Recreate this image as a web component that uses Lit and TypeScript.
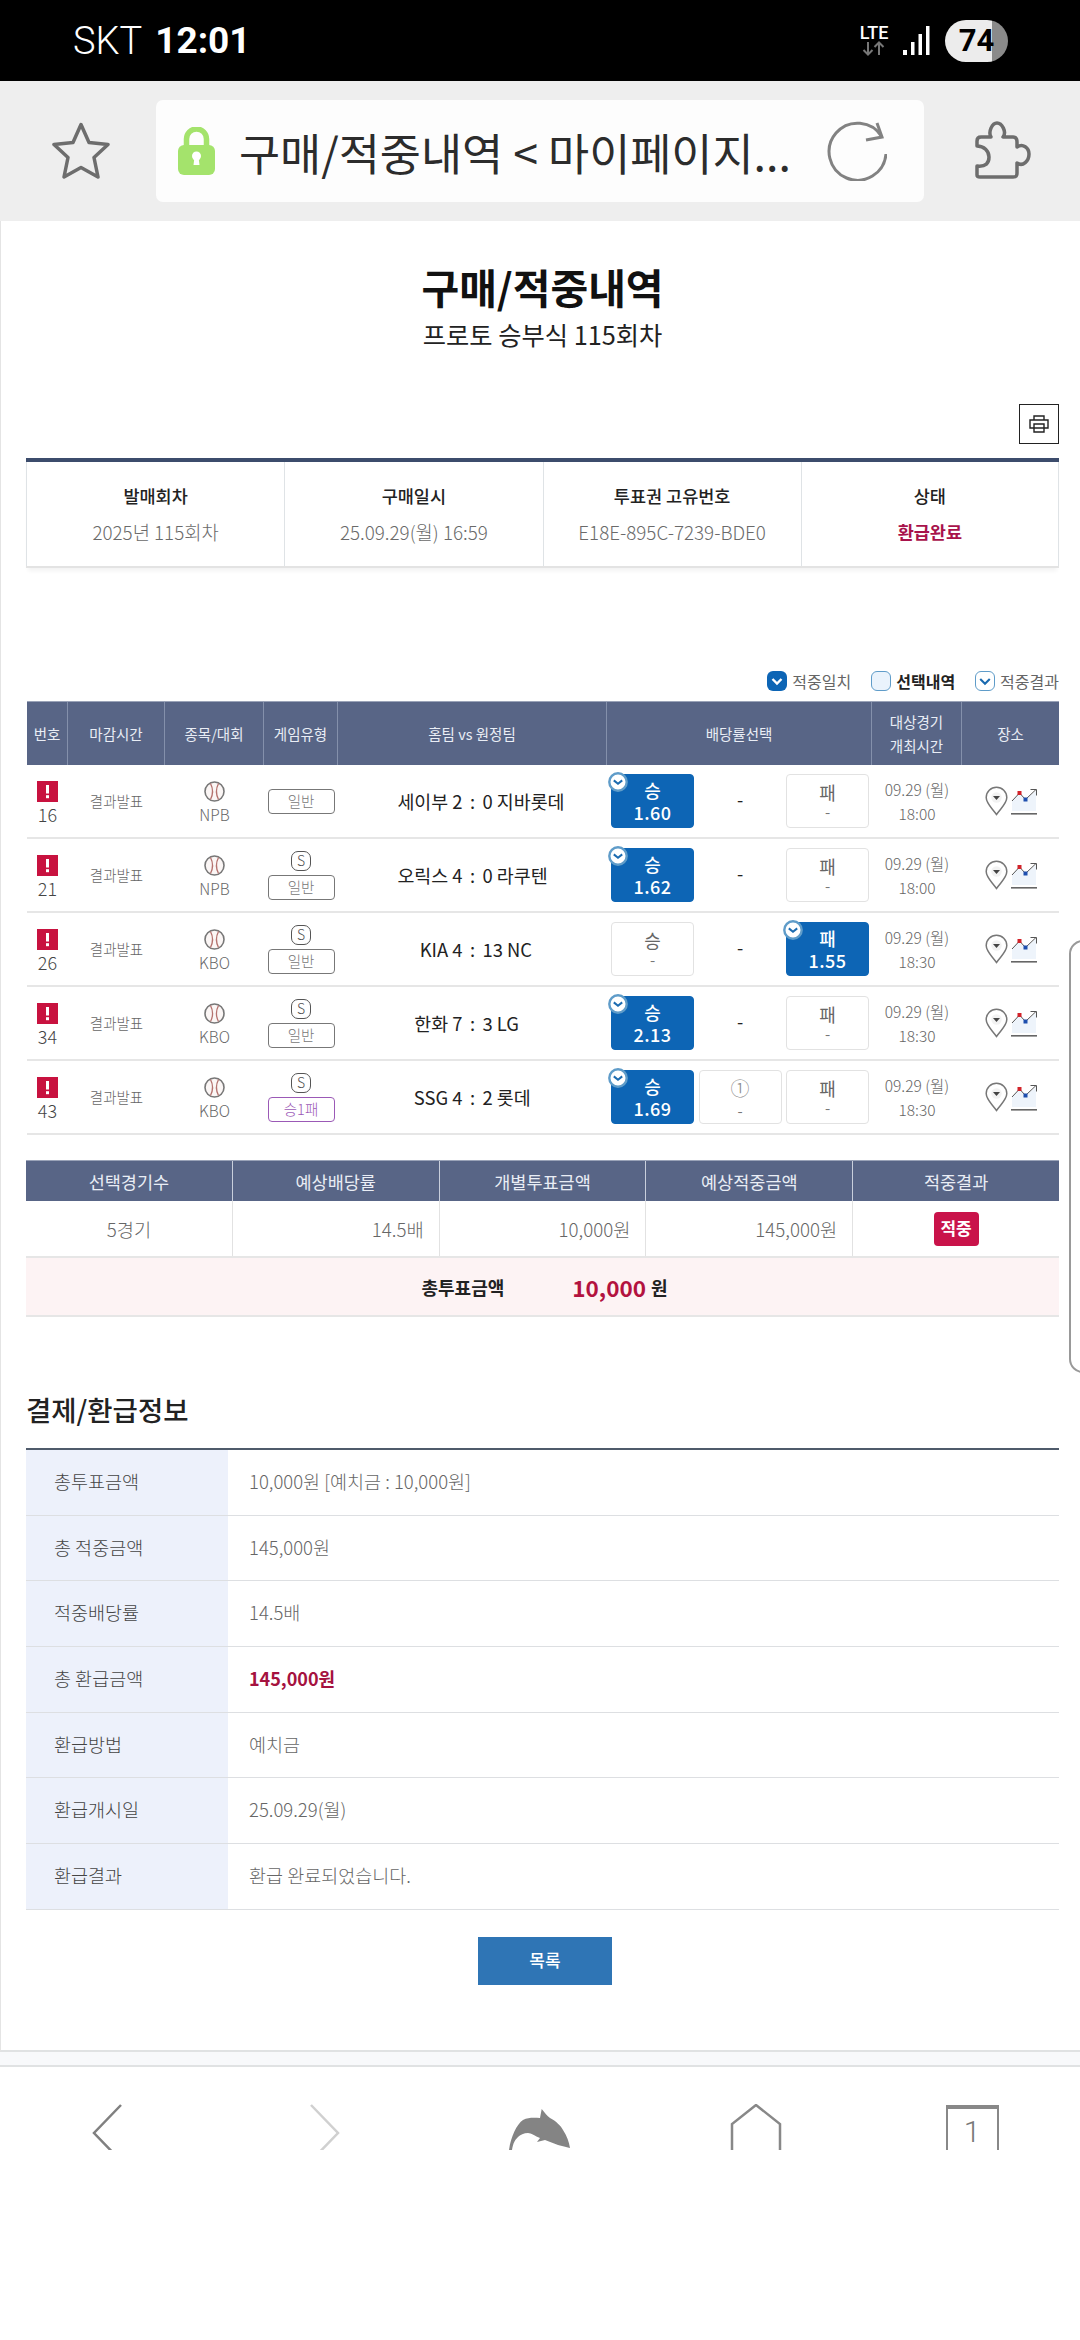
import { LitElement, html, css } from 'lit';
import { customElement } from 'lit/decorators.js';

const games = [
  { no: 16, league: 'NPB', star: false, type: '일반', promo: false, home: '세이부 2', away: '0 지바롯데', pick: 'win', odds: '1.60', mid: '-', time: '18:00' },
  { no: 21, league: 'NPB', star: true, type: '일반', promo: false, home: '오릭스 4', away: '0 라쿠텐', pick: 'win', odds: '1.62', mid: '-', time: '18:00' },
  { no: 26, league: 'KBO', star: true, type: '일반', promo: false, home: 'KIA 4', away: '13 NC', pick: 'lose', odds: '1.55', mid: '-', time: '18:30' },
  { no: 34, league: 'KBO', star: true, type: '일반', promo: false, home: '한화 7', away: '3 LG', pick: 'win', odds: '2.13', mid: '-', time: '18:30' },
  { no: 43, league: 'KBO', star: true, type: '승1패', promo: true, home: 'SSG 4', away: '2 롯데', pick: 'win', odds: '1.69', mid: '①', time: '18:30' },
];

const refund = [
  ['총투표금액', '10,000원 [예치금 : 10,000원]'],
  ['총 적중금액', '145,000원'],
  ['적중배당률', '14.5배'],
  ['총 환급금액', '145,000원'],
  ['환급방법', '예치금'],
  ['환급개시일', '25.09.29(월)'],
  ['환급결과', '환급 완료되었습니다.'],
];

const check = html`<svg class="tick" width="20" height="20" viewBox="0 0 20 20">
  <circle cx="10" cy="10" r="8.700" fill="#fff" stroke="#5f9cc9" stroke-width="2.400"></circle>
  <path d="M5.800 8.400 10 11.800l4.200-3.400" fill="none" stroke="#1c6bb0" stroke-width="2"></path>
</svg>`;

const alertIcon = html`<svg width="21" height="21" viewBox="0 0 21 21">
  <rect width="21" height="21" fill="#c8123f"></rect>
  <rect x="9" y="4" width="3" height="8.500" fill="#fff"></rect>
  <rect x="9" y="14.200" width="3" height="3" fill="#fff"></rect>
</svg>`;

const ball = html`<svg width="21" height="21" viewBox="0 0 21 21">
  <circle cx="10.500" cy="10.500" r="9.500" fill="#fbf6f5" stroke="#777" stroke-width="1.600"></circle>
  <path d="M6.500 2.500c2.600 5 2.600 11 0 16M14.500 2.500c-2.600 5-2.600 11 0 16" fill="none" stroke="#b5736f" stroke-width="1.300"></path>
</svg>`;

const pin = html`<svg width="23" height="30" viewBox="0 0 23 30">
  <path d="M11.500 28.500C7 22 1.200 17.500 1.200 11.500a10.300 10.300 0 0 1 20.600 0c0 6-5.800 10.500-10.300 17Z" fill="#fff" stroke="#777" stroke-width="1.500"></path>
  <circle cx="11.500" cy="11.500" r="5.200" fill="#f2f2f2"></circle>
  <path d="M8 10h7l-3.500 4Z" fill="#444"></path>
</svg>`;

const chart = html`<svg width="27" height="27" viewBox="0 0 27 27">
  <path d="M1 13 8.500 5l6 6.500L25 3v20H1Z" fill="#eef4fb"></path>
  <path d="M1 13 8.500 5l6 6.500L25 1.500" fill="none" stroke="#555" stroke-width="1"></path>
  <path d="M19.500 1.500H25.500V7.500" fill="none" stroke="#555" stroke-width="1"></path>
  <rect x="6.500" y="3" width="4" height="4" fill="#d2232a"></rect>
  <rect x="12.500" y="9.500" width="4" height="4" fill="#1e4fae"></rect>
  <rect x="0" y="25" width="26" height="1.600" fill="#666"></rect>
</svg>`;

@customElement('app-root')
export class AppRoot extends LitElement {
  static styles = css`
    :host {
      display: block;
      position: relative;
      width: 1080px;
      height: 2340px;
      overflow: hidden;
      background: #fff;
      color: #222;
      font-family: 'Noto Sans CJK KR', 'Noto Sans', sans-serif;
    }

    .status {
      height: 81px;
      background: #000;
      color: #fff;
      display: flex;
      align-items: center;
      padding: 0 72px 0 73px;
      font-family: Roboto, sans-serif;
      box-sizing: border-box;
    }
    .carrier { font-size: 38px; font-weight: 300; margin-right: 13px; }
    .clock { font-size: 37px; font-weight: 700; flex: 1; }
    .net { display: flex; flex-direction: column; align-items: center; width: 32px; margin-right: 13px; }
    .lte { font-size: 18px; font-weight: 500; line-height: 16px; }
    .battery {
      width: 63px;
      height: 42px;
      border-radius: 21px;
      margin-left: 15px;
      background: linear-gradient(90deg, #ececec 0 47px, #8a8a8a 47px);
      color: #000;
      font-size: 31px;
      font-weight: 700;
      line-height: 42px;
      text-align: center;
    }

    .browser {
      height: 140px;
      background: #eee;
      display: flex;
      align-items: center;
      box-sizing: border-box;
      padding: 0 0 0 52px;
    }
    .url {
      width: 768px;
      height: 102px;
      margin: 0 49px 0 46px;
      background: #fdfdfd;
      border-radius: 7px;
      display: flex;
      align-items: center;
      box-sizing: border-box;
      padding: 0 37px 0 22px;
    }
    .url-text {
      flex: 1;
      margin-left: 24px;
      font-size: 44.700px;
      color: #2c2c2c;
      white-space: nowrap;
    }

    .main {
      height: 1831px;
      box-sizing: border-box;
      border-left: 1px solid #e4e4e4;
      border-bottom: 2px solid #e0e2e3;
      padding: 40px 21px 0 25px;
    }
    h1 {
      margin: 0;
      font-size: 41px;
      line-height: 50px;
      font-weight: 700;
      text-align: center;
      color: #111;
    }
    .sub {
      margin-top: 5px;
      font-size: 25.300px;
      line-height: 36px;
      text-align: center;
      color: #222;
    }
    .print-row { display: flex; justify-content: flex-end; margin-top: 52px; }
    .print {
      width: 40px;
      height: 40px;
      box-sizing: border-box;
      border: 1.500px solid #222;
      display: flex;
      align-items: center;
      justify-content: center;
    }

    .ticket {
      margin-top: 14px;
      height: 110px;
      display: grid;
      grid-template-columns: repeat(4, 1fr);
      border-top: 4px solid #3c4c6c;
      border-bottom: 2px solid #e3e3e3;
      box-sizing: border-box;
      box-shadow: 0 5px 4px -2px #f3f3f3;
    }
    .ticket > div {
      border-left: 1px solid #dfe3e6;
      display: flex;
      flex-direction: column;
      align-items: center;
      gap: 12px;
      padding-top: 22px;
    }
    .ticket > div:last-child { border-right: 1px solid #dfe3e6; }
    .ticket b { font-size: 17.500px; line-height: 24px; font-weight: 500; color: #222; }
    .ticket span { font-size: 18.800px; line-height: 24px; font-weight: 300; color: #6a6a6a; }
    .ticket .state { color: #a8124b; font-size: 17.500px; font-weight: 700; }

    .legend {
      display: flex;
      justify-content: flex-end;
      margin-top: 103px;
      height: 20px;
      gap: 20px;
      font-size: 16px;
      line-height: 20px;
      color: #666;
    }
    .legend > div { display: flex; align-items: center; gap: 5px; }
    .box {
      width: 20px;
      height: 20px;
      box-sizing: border-box;
      border-radius: 6px;
      display: block;
    }
    .box.full { background: #0d65b5; }
    .box.soft { background: #eaf3fc; border: 1.500px solid #5f9cc9; }
    .box.outline { background: #fff; border: 1.500px solid #5f9cc9; }
    .legend b { color: #222; font-weight: 700; }

    .games { margin: 10px 0 0 1px; }
    .row {
      display: grid;
      grid-template-columns: 41px 97px 99px 74px 269px 265px 90px 97px;
    }
    .head {
      height: 64px;
      background: #586586;
      color: #e9edf5;
      font-size: 14.500px;
      border-top: 1px solid #9aa3b8;
      box-sizing: border-box;
    }
    .head > div {
      display: flex;
      align-items: center;
      justify-content: center;
      text-align: center;
      line-height: 24px;
      border-right: 1px solid #8490ab;
    }
    .head > div:last-child { border-right: 0; }
    .game {
      height: 74px;
      box-sizing: border-box;
      border-bottom: 2px solid #e6e6e6;
    }
    .cell {
      display: flex;
      flex-direction: column;
      align-items: center;
      justify-content: center;
      font-size: 15.500px;
      line-height: 24px;
      font-weight: 300;
      color: #666;
      min-width: 0;
    }
    .num { padding-top: 4px; font-size: 18px; color: #444; }
    .close { font-size: 14.500px; }
    .league { padding-top: 4px; }
    .kind { gap: 4px; }
    .s {
      width: 20px;
      height: 20px;
      box-sizing: border-box;
      border: 1.500px solid #555;
      border-radius: 7px;
      font-size: 14px;
      line-height: 17px;
      text-align: center;
      color: #555;
    }
    .pill {
      width: 67px;
      height: 25px;
      box-sizing: border-box;
      border: 1.500px solid #777;
      border-radius: 4px;
      font-size: 14.500px;
      line-height: 22px;
      text-align: center;
      color: #777;
    }
    .pill.promo { border-color: #9b59b6; color: #9b59b6; }
    .score {
      display: grid;
      grid-template-columns: 1fr 20px 1fr;
      align-items: center;
      font-size: 18.400px;
      color: #222;
      white-space: nowrap;
      height: 72px;
    }
    .score .home { text-align: right; }
    .score .colon { text-align: center; }
    .bets {
      display: grid;
      grid-template-columns: repeat(3, 83px);
      column-gap: 4.500px;
      padding: 9px 0 0 4px;
      height: 54px;
    }
    .bet {
      position: relative;
      height: 54px;
      box-sizing: border-box;
      border: 1.500px solid #e2e2e2;
      border-radius: 4px;
      display: flex;
      flex-direction: column;
      align-items: center;
      justify-content: center;
      font-size: 18px;
      line-height: 22px;
      color: #666;
    }
    .bet small { font-size: 15px; line-height: 18px; color: #777; }
    .bet.on {
      background: #0d65b5;
      border-color: #0d65b5;
      color: #fff;
      font-weight: 500;
    }
    .bet.on small { font-size: 18px; line-height: 22px; color: #fff; letter-spacing: 0.500px; }
    .bet.empty { border: 0; color: #222; padding-bottom: 4px; }
    .bet .mark { font-size: 19px; line-height: 28px; font-weight: 300; color: #888; }
    .tick { position: absolute; left: -4.500px; top: -3.500px; }
    .date { font-size: 15.500px; }
    .place { flex-direction: row; gap: 3px; padding-left: 2px; }

    .summary { margin-top: 25px; }
    .sum-row { display: grid; grid-template-columns: repeat(4, 206.800px) 1fr; }
    .sum-head {
      height: 41px;
      background: #586586;
      color: #e9edf5;
      font-size: 17.500px;
      line-height: 41px;
      text-align: center;
      border-top: 1px solid #9aa3b8;
      box-sizing: border-box;
    }
    .sum-head > div { border-right: 1px solid #c9cfdc; }
    .sum-head > div:last-child { border-right: 0; }
    .sum-body {
      height: 57px;
      font-size: 18.700px;
      font-weight: 300;
      color: #666;
      box-sizing: border-box;
      border-bottom: 2px solid #e6e6e6;
    }
    .sum-body > div {
      display: flex;
      align-items: center;
      justify-content: flex-end;
      padding-right: 15px;
      border-right: 1px solid #e2e2e2;
    }
    .sum-body > .mid { justify-content: center; padding-right: 0; }
    .sum-body > .mid:last-child { border-right: 0; }
    .hit {
      width: 45px;
      height: 34px;
      border-radius: 4px;
      background: #c9134a;
      color: #fff;
      font-size: 17px;
      font-weight: 700;
      line-height: 32px;
      text-align: center;
    }
    .total {
      height: 59px;
      background: #fdf3f4;
      border-bottom: 2px solid #e6e6e6;
      box-sizing: border-box;
      display: flex;
      align-items: center;
      justify-content: center;
      padding-left: 4px;
      font-size: 18px;
      font-weight: 700;
      color: #222;
    }
    .total em {
      margin: 0 5px 0 68px;
      font-style: normal;
      font-size: 22.500px;
      color: #b3123f;
    }

    h2 {
      margin: 72px 0 0;
      font-size: 27.500px;
      line-height: 40px;
      font-weight: 500;
      color: #222;
    }
    .refund { margin-top: 19px; border-top: 2px solid #4f5b6b; }
    .info {
      display: grid;
      grid-template-columns: 202px 1fr;
      height: 65.700px;
      box-sizing: border-box;
      border-bottom: 1px solid #dddfe2;
      font-size: 18.500px;
      font-weight: 300;
      line-height: 62px;
    }
    .info > div:first-child { background: #edf1fb; padding-left: 28px; color: #444; }
    .info > div:last-child { padding-left: 21px; color: #666; }
    .info > .strong:last-child { color: #a5123f; font-weight: 700; font-size: 18px; }
    .btn-row { display: flex; justify-content: center; margin: 27px 0 0 5px; }
    .btn {
      width: 134px;
      height: 48px;
      background: #2f75b5;
      color: #fff;
      font-size: 17px;
      font-weight: 500;
      line-height: 46px;
      text-align: center;
    }

    .strip { height: 13px; background: #f8f9fb; border-bottom: 2px solid #e0e2e3; }
    .nav {
      height: 83px;
      overflow: hidden;
      display: grid;
      grid-template-columns: repeat(5, 216px);
      justify-items: center;
      padding-top: 37px;
      box-sizing: border-box;
    }
    .dolphin { margin-top: 4px; }
    .tab {
      width: 53px;
      height: 45px;
      margin-top: 1px;
      box-sizing: border-box;
      border: 2px solid #888;
      border-top-width: 4px;
      border-bottom: 0;
      padding-top: 4px;
      font-family: Roboto, sans-serif;
      font-size: 30px;
      font-weight: 300;
      color: #777;
      text-align: center;
      line-height: 37px;
    }

    .handle {
      position: absolute;
      left: 1069px;
      top: 940px;
      width: 40px;
      height: 433px;
      box-sizing: border-box;
      border: 2px solid #999;
      border-radius: 14px;
      background: #fff;
    }
  `;

  renderBet(label: string, odds: string, on: boolean) {
    return html`<div class="bet ${on ? 'on' : ''}">
      ${on ? check : ''}${label}<small>${on ? odds : '-'}</small>
    </div>`;
  }

  renderGame(g: (typeof games)[number]) {
    return html`<div class="row game">
      <div class="cell num">${alertIcon}${g.no}</div>
      <div class="cell close">결과발표</div>
      <div class="cell league">${ball}${g.league}</div>
      <div class="cell kind">
        ${g.star ? html`<div class="s">S</div>` : ''}
        <div class="pill ${g.promo ? 'promo' : ''}">${g.type}</div>
      </div>
      <div class="score">
        <span class="home">${g.home}</span><span class="colon">:</span><span>${g.away}</span>
      </div>
      <div class="bets">
        ${this.renderBet('승', g.odds, g.pick === 'win')}
        ${g.mid === '-'
          ? html`<div class="bet empty">-</div>`
          : html`<div class="bet"><span class="mark">${g.mid}</span><small>-</small></div>`}
        ${this.renderBet('패', g.odds, g.pick === 'lose')}
      </div>
      <div class="cell date"><span>09.29 (월)</span><span>${g.time}</span></div>
      <div class="cell place">${pin}${chart}</div>
    </div>`;
  }

  render() {
    return html`
      <div class="status">
        <span class="carrier">SKT</span>
        <span class="clock">12:01</span>
        <div class="net">
          <span class="lte">LTE</span>
          <svg width="24" height="15" viewBox="0 0 24 15">
            <path d="M6 1v12M1.500 9 6 13.500 10.500 9M17 14V2M12.500 6 17 1.500 21.500 6" fill="none" stroke="#777" stroke-width="2"></path>
          </svg>
        </div>
        <svg width="27" height="29" viewBox="0 0 27 29">
          <rect x="0" y="24" width="4" height="5" fill="#fff"></rect>
          <rect x="8" y="16" width="3.500" height="13" fill="#fff"></rect>
          <rect x="15.500" y="8" width="3.500" height="21" fill="#fff"></rect>
          <rect x="23" y="0" width="3.500" height="29" fill="#fff"></rect>
        </svg>
        <div class="battery">74</div>
      </div>

      <div class="browser">
        <svg width="58" height="58" viewBox="0 0 58 58">
          <path d="M29 2.500 37 20.500 56 22.500 42 35.500 46 55 29 45.500 12 55 16 35.500 2 22.500 21 20.500Z" fill="none" stroke="#6d6d6d" stroke-width="3.500" stroke-linejoin="round"></path>
        </svg>
        <div class="url">
          <svg width="37" height="48" viewBox="0 0 37 48">
            <path d="M8.500 20V12a10 10 0 0 1 20 0v8" fill="none" stroke="#a4e36c" stroke-width="5.500"></path>
            <rect x="0" y="18" width="37" height="30" rx="6" fill="#a4e36c"></rect>
            <circle cx="18.500" cy="29" r="4.500" fill="#fff"></circle>
            <path d="M16.500 30h4l1 8h-6Z" fill="#fff"></path>
          </svg>
          <span class="url-text">구매/적중내역 &lt; 마이페이지...</span>
          <svg width="60" height="60" viewBox="0 0 60 60">
            <path d="M59 33A28.500 28.500 0 1 1 55 16" fill="none" stroke="#828282" stroke-width="3"></path>
            <path d="M50 2 55 16 39 19" fill="none" stroke="#828282" stroke-width="3"></path>
          </svg>
        </div>
        <svg width="60" height="60" viewBox="0 0 60 60">
          <path d="M4 54V45C13 46 16 42 16 36C16 30 11 25 4 25V20C4 17 6 16 8 16H18C15 11 19 2 24 2C29 2 34 11 30 16H40C43 16 44 18 44 21V26C50 22 56 27 56 33C56 40 50 46 44 42V52C44 55 43 56 40 56H7C5 56 4 55 4 54Z" fill="none" stroke="#6d6d6d" stroke-width="3.500" stroke-linejoin="round"></path>
        </svg>
      </div>

      <div class="main">
        <h1>구매/적중내역</h1>
        <div class="sub">프로토 승부식 115회차</div>

        <div class="print-row">
          <div class="print">
            <svg width="20" height="18" viewBox="0 0 20 18">
              <path d="M5 5V1h10v4M1 5h18v8H1ZM5 9h10v8H5Z" fill="#fff" stroke="#222" stroke-width="1.400"></path>
            </svg>
          </div>
        </div>

        <div class="ticket">
          <div><b>발매회차</b><span>2025년 115회차</span></div>
          <div><b>구매일시</b><span>25.09.29(월) 16:59</span></div>
          <div><b>투표권 고유번호</b><span>E18E-895C-7239-BDE0</span></div>
          <div><b>상태</b><span class="state">환급완료</span></div>
        </div>

        <div class="legend">
          <div>
            <svg class="box full" viewBox="0 0 20 20"><path d="M5.500 8 10 12.500 14.500 8" fill="none" stroke="#fff" stroke-width="2.400"></path></svg>
            적중일치
          </div>
          <div><span class="box soft"></span><b>선택내역</b></div>
          <div>
            <svg class="box outline" viewBox="0 0 17 17"><path d="M4 6.500 8.500 11 13 6.500" fill="none" stroke="#1c6bb0" stroke-width="2"></path></svg>
            적중결과
          </div>
        </div>

        <div class="games">
          <div class="row head">
            <div>번호</div>
            <div>마감시간</div>
            <div>종목/대회</div>
            <div>게임유형</div>
            <div>홈팀 vs 원정팀</div>
            <div>배당률선택</div>
            <div>대상경기<br />개최시간</div>
            <div>장소</div>
          </div>
          ${games.map(g => this.renderGame(g))}
        </div>

        <div class="summary">
          <div class="sum-row sum-head">
            <div>선택경기수</div>
            <div>예상배당률</div>
            <div>개별투표금액</div>
            <div>예상적중금액</div>
            <div>적중결과</div>
          </div>
          <div class="sum-row sum-body">
            <div class="mid">5경기</div>
            <div>14.5배</div>
            <div>10,000원</div>
            <div>145,000원</div>
            <div class="mid"><span class="hit">적중</span></div>
          </div>
          <div class="total">총투표금액<em>10,000</em>원</div>
        </div>

        <h2>결제/환급정보</h2>
        <div class="refund">
          ${refund.map(
            ([k, v]) => html`<div class="info">
              <div>${k}</div>
              <div class="${k === '총 환급금액' ? 'strong' : ''}">${v}</div>
            </div>`
          )}
        </div>

        <div class="btn-row"><div class="btn">목록</div></div>
      </div>

      <div class="strip"></div>
      <div class="nav">
        <svg width="32" height="46" viewBox="0 0 32 46">
          <path d="M29 1 2 29l27 28" fill="none" stroke="#808080" stroke-width="2.500"></path>
        </svg>
        <svg width="32" height="46" viewBox="0 0 32 46">
          <path d="M3 1l27 28L3 57" fill="none" stroke="#d0d0d0" stroke-width="2.500"></path>
        </svg>
        <svg class="dolphin" width="64" height="43" viewBox="0 0 64 43">
          <path d="M1 42C3 28 9 16 15 12C21 9 27 10 32 10L33.700 1C37 5 39 8 42 10C48 13 53 18 55 22C59 28 61 34 62 40L50 37 37 32 29 34 32 30C27 28 23 25 20 25C16 25 12 27 10 29C7 32 5 35 4 42Z" fill="#848484"></path>
        </svg>
        <svg width="52" height="46" viewBox="0 0 52 46">
          <path d="M2 46V20L26 1l24 19v26" fill="none" stroke="#888" stroke-width="2.500"></path>
        </svg>
        <div class="tab">1</div>
      </div>

      <div class="handle"></div>
    `;
  }
}
